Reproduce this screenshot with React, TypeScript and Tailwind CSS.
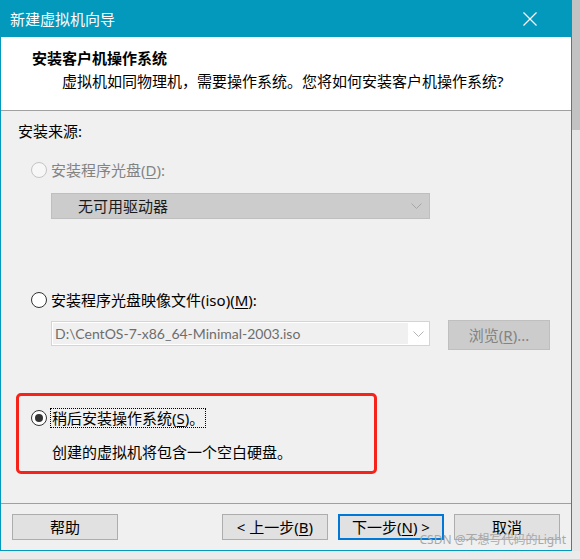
import type { ReactNode } from "react";

const FONT = {
  fontFamily: '"Noto Sans", "Noto Sans CJK SC", sans-serif',
};

function Radio({ state }: { state: "disabled" | "off" | "on" }) {
  if (state === "disabled") {
    return <span className="block h-[16px] w-[16px] shrink-0 rounded-full border border-[#c4c4c4] bg-[#f7f7f7]" />;
  }
  return (
    <span className="flex h-[16px] w-[16px] shrink-0 items-center justify-center rounded-full border border-[#333333] bg-white">
      {state === "on" && <span className="block h-[8px] w-[8px] rounded-full bg-[#333333]" />}
    </span>
  );
}

function Chevron({ color }: { color: string }) {
  return (
    <svg width="11" height="6" viewBox="0 0 11 6" fill="none">
      <path d="M0.5 0.5 L5.5 5.5 L10.5 0.5" stroke={color} strokeWidth="1" />
    </svg>
  );
}

function Btn({ children, focus = false }: { children: ReactNode; focus?: boolean }) {
  return (
    <button
      className={`flex h-[26px] w-[106px] items-center justify-center bg-[#e1e1e1] text-[15px] text-black ${
        focus ? "border-2 border-[#0078d7]" : "border border-[#adadad]"
      }`}
    >
      {children}
    </button>
  );
}

export default function App() {
  return (
    <div className="flex h-[559px] w-[580px] flex-col overflow-hidden bg-[#ebebeb]" style={FONT}>
      <div className="flex">
        {/* 向导窗口 */}
        <div className="relative flex h-[551px] w-[572px] flex-col border-x border-b border-[#0399bd] bg-[#f0f0f0]">
          {/* 标题栏 */}
          <div className="flex h-[37px] shrink-0 items-center justify-between bg-[#0399bd] pl-[9px] pr-[34px] text-white">
            <span className="text-[15px] leading-5">新建虚拟机向导</span>
            <svg width="14" height="14" viewBox="0 0 14 14" fill="none">
              <path d="M0.5 0.5 L13.5 13.5 M13.5 0.5 L0.5 13.5" stroke="white" strokeWidth="1.2" />
            </svg>
          </div>

          {/* 页眉 */}
          <div className="h-[74px] shrink-0 border-b border-[#a0a0a0] bg-white pt-[11px]">
            <div className="pl-[31px] text-[15px] font-bold leading-5 text-black">安装客户机操作系统</div>
            <div className="mt-[3px] pl-[61px] text-[15px] leading-5 text-black">
              虚拟机如同物理机，需要操作系统。您将如何安装客户机操作系统?
            </div>
          </div>

          {/* 主体 */}
          <div className="flex flex-1 flex-col pt-[10px] text-[15px] leading-5">
            <div className="h-5 pl-[17px] text-black">安装来源:</div>

            <div className="mt-[19px] flex h-5 items-center gap-[4px] pl-[30px] text-[#838383]">
              <Radio state="disabled" />
              <span>
                安装程序光盘(<span className="underline underline-offset-2">D</span>):
              </span>
            </div>

            <div className="ml-[50px] mt-[13px] flex h-[26px] w-[379px] items-center justify-between border border-[#bfbfbf] bg-[#cccccc] pl-[26px] pr-[7px]">
              <span className="text-[#1a1a1a]">无可用驱动器</span>
              <Chevron color="#a6a6a6" />
            </div>

            <div className="mt-[71px] flex h-5 items-center gap-[4px] pl-[30px] text-black">
              <Radio state="off" />
              <span>
                安装程序光盘映像文件(iso)(<span className="underline underline-offset-2">M</span>):
              </span>
            </div>

            <div className="mt-[10px] flex items-start pl-[50px]">
              <div className="mt-[1px] flex h-[25px] w-[379px] items-center border border-[#d4d4d4] bg-white p-[1px]">
                <div className="flex h-full w-[355px] items-center bg-[#f0f0f0] pl-[2px] font-['Lato',sans-serif] text-[14px] text-[#6d6d6d]">
                  D:\CentOS-7-x86_64-Minimal-2003.iso
                </div>
                <div className="flex flex-1 items-center justify-center">
                  <Chevron color="#b4b4b4" />
                </div>
              </div>
              <div className="ml-[18px] flex h-[30px] w-[102px] items-center justify-center border border-[#bfbfbf] bg-[#cccccc] text-[#838383]">
                浏览(<span className="underline underline-offset-2">R</span>)...
              </div>
            </div>

            {/* 红框标注 */}
            <div className="ml-[15px] mt-[43px] h-[81px] w-[361px] rounded-[5px] border-[3px] border-[#f5231a] pl-[12px] pt-[12px]">
              <div className="flex h-5 items-center gap-[3px] text-black">
                <Radio state="on" />
                <span className="border border-dotted border-black px-[1px] leading-[18px]">
                  稍后安装操作系统(<span className="underline underline-offset-2">S</span>)。
                </span>
              </div>
              <div className="mt-[14px] pl-[21px] text-black">创建的虚拟机将包含一个空白硬盘。</div>
            </div>
          </div>

          {/* 按钮栏 */}
          <div className="flex h-[47px] shrink-0 items-start border-t border-[#a0a0a0] pl-[11px] pt-[10px]">
            <Btn>帮助</Btn>
            <div className="ml-[104px]">
              <Btn>
                &lt; 上一步(<span className="underline underline-offset-2">B</span>)
              </Btn>
            </div>
            <div className="ml-[10px]">
              <Btn focus>
                下一步(<span className="underline underline-offset-2">N</span>) &gt;
              </Btn>
            </div>
            <div className="ml-[10px]">
              <Btn>取消</Btn>
            </div>
          </div>

          {/* 水印 */}
          <span className="absolute bottom-[2px] right-[5px] text-[12px] leading-4 text-[#a8a8a8]">
            CSDN @不想写代码的Light
          </span>
        </div>

        {/* 窗口背后的滚动条 */}
        <div className="flex w-[8px] flex-col">
          <div className="h-[130px] bg-[#c2c2c2]" />
          <div className="flex-1 bg-[#e6e6e6]" />
        </div>
      </div>
    </div>
  );
}
